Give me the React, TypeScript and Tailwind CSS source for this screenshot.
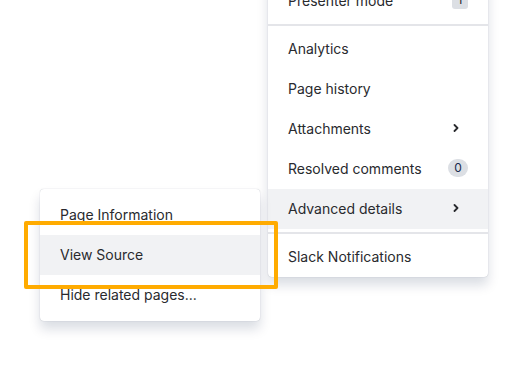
import type { ReactNode } from 'react';

const Chevron = () => (
  <svg width="6" height="8" viewBox="0 0 6 8" className="mr-[9px] text-[#292A2E]">
    <path d="M1.5 1 L4.5 4 L1.5 7" fill="none" stroke="currentColor" strokeWidth="1.8" strokeLinecap="round" strokeLinejoin="round" />
  </svg>
);

interface ItemProps {
  label: string;
  active?: boolean;
  right?: ReactNode;
}

const Item = ({ label, active, right }: ItemProps) => (
  <div
    className={`flex h-10 items-center justify-between pb-[2px] pl-5 pr-5 text-[14px] text-[#292A2E] ${
      active ? 'bg-[#F1F2F4]' : ''
    }`}
  >
    <span>{label}</span>
    {right}
  </div>
);

const Divider = () => <div className="h-[2px] bg-[#E4E5E9]" />;

export default function App() {
  return (
    <div className="relative h-[391px] w-[522px] overflow-hidden bg-white font-['Inter',_'Noto_Sans',_sans-serif] antialiased">
      {/* main "more actions" menu, scrolled so its top is cut off */}
      <div className="absolute left-[268px] top-[-19px] w-[220px] rounded-[4px] bg-white shadow-[0_8px_12px_rgba(9,30,66,0.15),0_0_1px_rgba(9,30,66,0.31)]">
        <div className="pb-[3px]">
          <Item
            label="Presenter mode"
            right={
              <span className="flex h-[18px] w-4 items-center justify-center rounded-[3px] bg-[#DCDFE4] text-[12px] text-[#292A2E]">
                1
              </span>
            }
          />
        </div>
        <Divider />
        <div className="py-[3px]">
          <Item label="Analytics" />
          <Item label="Page history" />
          <Item label="Attachments" right={<Chevron />} />
          <Item
            label="Resolved comments"
            right={
              <span className="flex h-[18px] w-5 items-center justify-center rounded-full bg-[#DCDFE4] text-[12px] text-[#172B4D]">
                0
              </span>
            }
          />
          <Item label="Advanced details" active right={<Chevron />} />
        </div>
        <Divider />
        <div className="pt-[3px]">
          <Item label="Slack Notifications" />
        </div>
      </div>

      {/* advanced details submenu */}
      <div className="absolute left-[40px] top-[189px] w-[220px] rounded-[4px] bg-white py-[6px] shadow-[0_8px_12px_rgba(9,30,66,0.15),0_0_1px_rgba(9,30,66,0.31)]">
        <Item label="Page Information" />
        <Item label="View Source" active />
        <Item label="Hide related pages..." />
      </div>

      {/* highlight */}
      <div className="absolute left-[24px] top-[221px] h-[68px] w-[254px] rounded-[2px] border-4 border-[#FFAB00]" />
    </div>
  );
}
